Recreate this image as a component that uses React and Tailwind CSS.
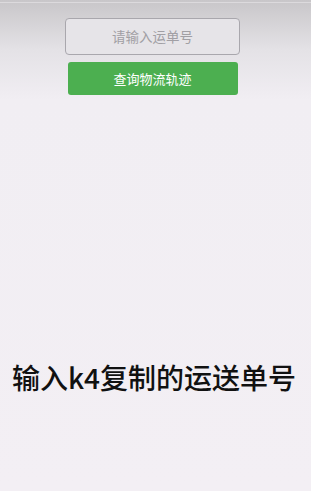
export default function App() {
  return (
    <div
      className="min-h-[491px] w-full bg-[linear-gradient(to_bottom,#c8c6c9_0px,#e4e2e6_50px,#f1eef3_100px,#f3eff4_491px)] flex flex-col items-center"
      style={{ fontFamily: '"Noto Sans CJK SC", "Noto Sans", sans-serif' }}
    >
      <div className="w-full h-[3px] border-b border-[#dcdadd]" />
      <div className="flex flex-col items-center pr-[6px]">
        <div className="mt-[15px] w-[175px] h-[37px] rounded-[4px] border border-[#a9a7ad] bg-[#e6e4e8] flex items-center justify-center text-[13.5px] text-[#a19fa4]">
          请输入运单号
        </div>
        <button className="mt-[7px] w-[170px] h-[33px] rounded-[3px] bg-[#4caf50] text-white text-[13px] flex items-center justify-center">
          查询物流轨迹
        </button>
      </div>
      <div className="mt-[268px] pr-[3px] text-[28px] font-medium text-[#111] leading-none">
        输入k4复制的运送单号
      </div>
    </div>
  );
}
